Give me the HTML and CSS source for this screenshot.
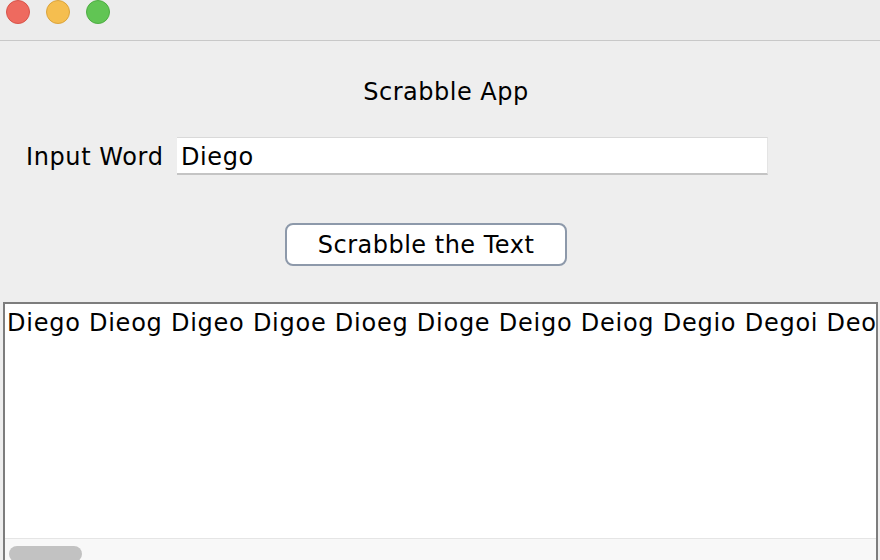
FILE: index.html
```html
<!DOCTYPE html>
<html>
<head>
<meta charset="utf-8">
<link rel="stylesheet" href="styles.css">
</head>
<body>
<div class="window">
  <div class="titlebar">
    <span class="light red"></span>
    <span class="light yellow"></span>
    <span class="light green"></span>
  </div>
  <div class="content">
    <div class="title">Scrabble App</div>
    <div class="input-row">
      <label class="label">Input Word</label>
      <div class="field">Diego</div>
    </div>
    <div class="button-row">
      <button class="btn">Scrabble the Text</button>
    </div>
    <div class="output">
      <div class="output-text">Diego Dieog Digeo Digoe Dioeg Dioge Deigo Deiog Degio Degoi Deogi Deoig Dgieo Dgioe Dgeio Dgeoi Dgoie Dgoei</div>
      <div class="hscroll"><div class="thumb"></div></div>
    </div>
  </div>
</div>
</body>
</html>
```
FILE: styles.css
```css
html, body {
  margin: 0;
  padding: 0;
}
body {
  width: 880px;
  height: 560px;
  overflow: hidden;
  background: #ececec;
  font-family: "DejaVu Sans", "Verdana", sans-serif;
  color: #000;
}
.window {
  display: flex;
  flex-direction: column;
  height: 560px;
}
.titlebar {
  box-sizing: border-box;
  height: 41px;
  border-bottom: 1px solid #c8c8c8;
  display: flex;
  align-items: flex-start;
  padding-left: 6px;
  gap: 16px;
  background: #ececec;
}
.light {
  width: 24px;
  height: 24px;
  border-radius: 50%;
  box-sizing: border-box;
}
.red { background: #ee6a5f; border: 1px solid #d8544a; }
.yellow { background: #f5be4f; border: 1px solid #dba43c; }
.green { background: #61c554; border: 1px solid #4ead43; }
.content {
  flex: 1;
  display: flex;
  flex-direction: column;
  background: #eeeeee;
  min-height: 0;
}
.title {
  text-align: center;
  font-size: 24px;
  letter-spacing: 0.5px;
  margin-top: 37px;
  padding-left: 12px;
  line-height: 28px;
}
.input-row {
  display: flex;
  align-items: flex-start;
  margin-top: 31px;
  padding-left: 26px;
  height: 38px;
}
.label {
  font-size: 24px;
  letter-spacing: 0.6px;
  width: 151px;
  white-space: nowrap;
  line-height: 36px;
  padding-top: 2px;
}
.field {
  width: 591px;
  height: 38px;
  box-sizing: border-box;
  background: #fff;
  border-top: 1px solid #d9d9d9;
  border-bottom: 2px solid #c4c4c4;
  border-right: 1px solid #e4e4e4;
  font-size: 24px;
  letter-spacing: 0.6px;
  line-height: 38px;
  padding-left: 4px;
}
.button-row {
  display: flex;
  margin-top: 48px;
  padding-left: 285px;
}
.btn {
  box-sizing: border-box;
  width: 282px;
  height: 43px;
  border: 2px solid #8d99aa;
  border-radius: 8px;
  background: #fff;
  font-family: inherit;
  font-size: 24px;
  letter-spacing: 0.5px;
  color: #000;
  padding: 0;
  line-height: 38px;
}
.output {
  margin: 36px 2px 0 3px;
  flex: 1;
  min-height: 0;
  border: 2px solid #7d7d7d;
  border-bottom: none;
  background: #fff;
  display: flex;
  flex-direction: column;
  overflow: hidden;
}
.output-text {
  flex: 1;
  white-space: nowrap;
  overflow: hidden;
  font-size: 24px;
  letter-spacing: 0.75px;
  line-height: 30px;
  padding-left: 2px;
  padding-top: 4px;
}
.hscroll {
  flex: none;
  height: 21px;
  border-top: 1px solid #e5e5e5;
  background: #f8f8f8;
  position: relative;
}
.thumb {
  position: absolute;
  left: 4px;
  top: 7px;
  width: 73px;
  height: 16px;
  border-radius: 8px;
  background: #c2c2c2;
}
```
